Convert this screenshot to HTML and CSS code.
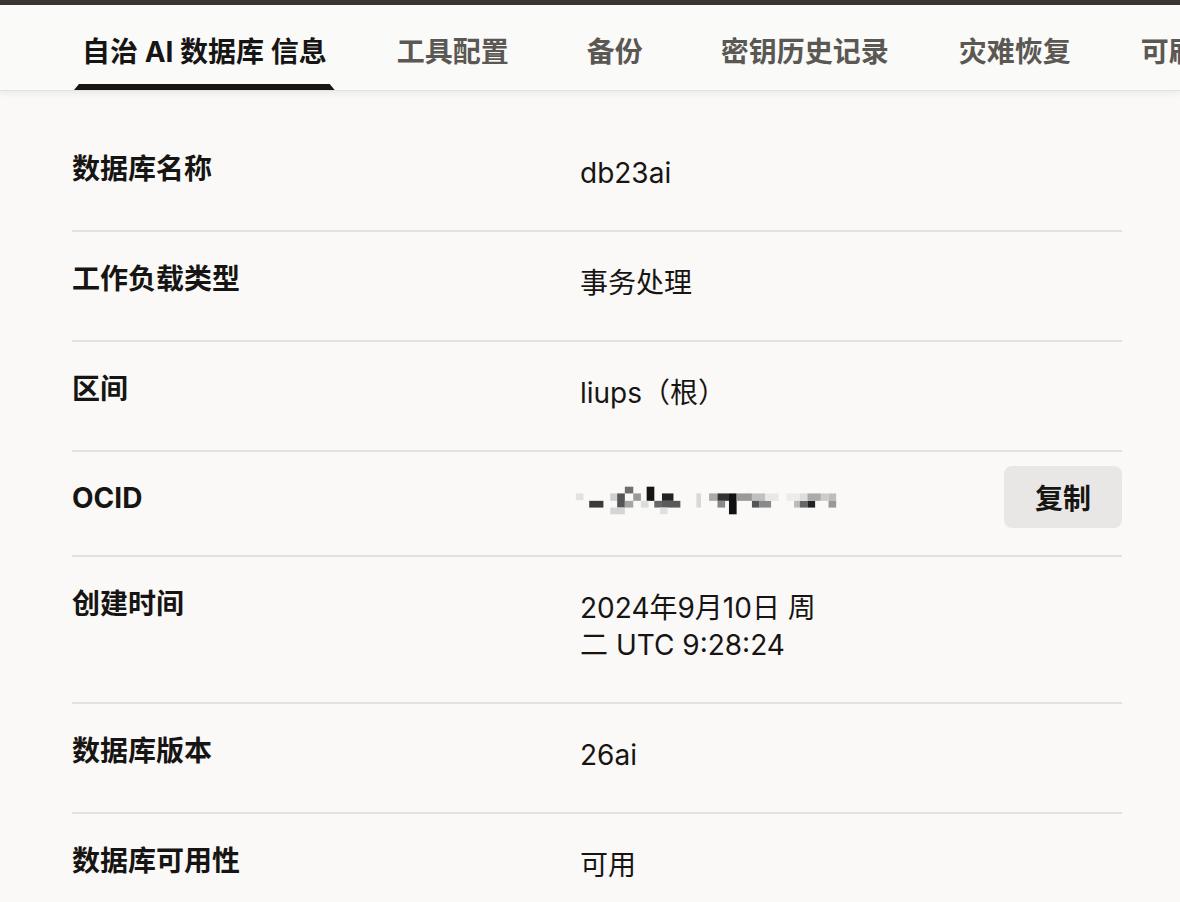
FILE: index.html
```html
<!DOCTYPE html>
<html lang="zh-CN">
<head>
<meta charset="utf-8">
<title>自治 AI 数据库 信息</title>
<link rel="stylesheet" href="styles.css">
</head>
<body>
<div class="topbar"></div>
<nav class="tabs">
  <div class="tab active">自治 AI 数据库 信息</div>
  <div class="tab">工具配置</div>
  <div class="tab">备份</div>
  <div class="tab">密钥历史记录</div>
  <div class="tab">灾难恢复</div>
  <div class="tab">可刷新克隆</div>
</nav>
<main class="details">
  <div class="row">
    <div class="label">数据库名称</div>
    <div class="value">db23ai</div>
  </div>
  <div class="row">
    <div class="label">工作负载类型</div>
    <div class="value">事务处理</div>
  </div>
  <div class="row">
    <div class="label">区间</div>
    <div class="value">liups（根）</div>
  </div>
  <div class="row row-action">
    <div class="label">OCID</div>
    <div class="value">
      <svg class="mosaic" viewBox="30 70 700 95" preserveAspectRatio="none" width="268" height="32" aria-label="OCID（已模糊处理）">
        <rect x="40" y="95" width="20" height="20" fill="#e2e2e2"/>
        <rect x="75" y="117" width="37" height="20" fill="#3a3a3a"/>
        <rect x="130" y="95" width="18" height="22" fill="#cfcfcf"/>
        <rect x="148" y="95" width="20" height="42" fill="#555"/>
        <rect x="130" y="137" width="38" height="20" fill="#d5d5d5"/>
        <rect x="168" y="75" width="22" height="20" fill="#6e6e6e"/>
        <rect x="168" y="117" width="22" height="20" fill="#a5a5a5"/>
        <rect x="190" y="95" width="20" height="22" fill="#9a9a9a"/>
        <rect x="225" y="75" width="20" height="42" fill="#151515"/>
        <rect x="210" y="117" width="20" height="20" fill="#dcdcdc"/>
        <rect x="245" y="117" width="20" height="20" fill="#666"/>
        <rect x="265" y="95" width="30" height="22" fill="#222"/>
        <rect x="265" y="117" width="48" height="20" fill="#5a5a5a"/>
        <rect x="260" y="137" width="20" height="20" fill="#e0e0e0"/>
        <rect x="355" y="95" width="12" height="42" fill="#d8d8d8"/>
        <rect x="388" y="95" width="22" height="22" fill="#aaa"/>
        <rect x="410" y="95" width="30" height="22" fill="#333"/>
        <rect x="440" y="95" width="20" height="62" fill="#111"/>
        <rect x="410" y="117" width="20" height="20" fill="#888"/>
        <rect x="460" y="95" width="40" height="22" fill="#999"/>
        <rect x="500" y="95" width="35" height="22" fill="#c0c0c0"/>
        <rect x="500" y="117" width="20" height="20" fill="#555"/>
        <rect x="520" y="117" width="30" height="20" fill="#8a8a8a"/>
        <rect x="535" y="95" width="35" height="22" fill="#e8e8e8"/>
        <rect x="590" y="95" width="35" height="22" fill="#ececec"/>
        <rect x="610" y="117" width="15" height="20" fill="#bbb"/>
        <rect x="625" y="117" width="20" height="20" fill="#666"/>
        <rect x="645" y="117" width="20" height="20" fill="#222"/>
        <rect x="625" y="95" width="20" height="22" fill="#ddd"/>
        <rect x="645" y="95" width="35" height="22" fill="#aaa"/>
        <rect x="680" y="95" width="20" height="22" fill="#ccc"/>
        <rect x="700" y="95" width="20" height="22" fill="#bdbdbd"/>
        <rect x="700" y="117" width="20" height="20" fill="#999"/>
      </svg>
    </div>
    <button class="copy-btn" type="button">复制</button>
  </div>
  <div class="row">
    <div class="label">创建时间</div>
    <div class="value">2024年9月10日 周二 UTC 9:28:24</div>
  </div>
  <div class="row">
    <div class="label">数据库版本</div>
    <div class="value">26ai</div>
  </div>
  <div class="row">
    <div class="label">数据库可用性</div>
    <div class="value">可用</div>
  </div>
</main>
</body>
</html>
```

FILE: styles.css
```css
* {
  box-sizing: border-box;
}

html, body {
  margin: 0;
  padding: 0;
  height: 100%;
  overflow: hidden;
}

body {
  background: #faf9f7;
  color: #161513;
  font-family: Inter, "Noto Sans CJK SC", sans-serif;
  font-size: 28px;
  line-height: 37px;
}

.topbar {
  height: 5px;
  background: #3a3632;
}

.tabs {
  display: flex;
  gap: 54px;
  height: 86px;
  padding-left: 74px;
  background: #fafaf9;
  border-bottom: 1px solid #e3e2e0;
  box-shadow: 0 2px 7px rgba(0, 0, 0, 0.07);
  white-space: nowrap;
  overflow: hidden;
  position: relative;
  z-index: 1;
}

.tab {
  position: relative;
  display: flex;
  align-items: center;
  justify-content: center;
  flex: none;
  min-width: 88px;
  height: 85px;
  padding: 10px 8px 0;
  font-weight: 600;
  color: #5b5854;
}

.tab.active {
  font-weight: 700;
  color: #161513;
}

.tab.active::after {
  content: "";
  position: absolute;
  left: 0;
  right: 0;
  bottom: 0;
  height: 6px;
  background: #161513;
  border-radius: 3px 3px 0 0;
  clip-path: polygon(5px 0, calc(100% - 5px) 0, 100% 100%, 0 100%);
}

.details {
  margin: 0 58px 0 72px;
  padding-top: 31px;
}

.row {
  display: grid;
  grid-template-columns: 508px 262px 1fr;
  padding: 29px 0 38px;
  border-bottom: 2px solid #e2e1de;
}

.label {
  font-weight: 700;
  line-height: 37px;
}

.value {
  padding-top: 4px;
  line-height: 37px;
  font-weight: 400;
}

.row-action {
  align-items: center;
  padding: 14px 0 27px;
}

.row-action .label {
  padding-top: 2px;
}

.row-action .value {
  padding-top: 0;
  display: flex;
}

.mosaic {
  display: block;
  margin-left: -8px;
  margin-top: 8px;
}

.copy-btn {
  justify-self: end;
  width: 118px;
  height: 62px;
  border: none;
  border-radius: 8px;
  background: #e8e7e5;
  color: #161513;
  font-family: Inter, "Noto Sans CJK SC", sans-serif;
  font-size: 28px;
  font-weight: 700;
  padding: 0;
}
```
